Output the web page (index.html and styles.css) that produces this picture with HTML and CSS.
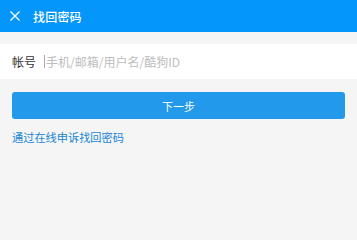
FILE: index.html
```html
<!DOCTYPE html>
<html lang="zh">
<head>
<meta charset="utf-8">
<link rel="stylesheet" href="styles.css">
</head>
<body>
<header class="topbar">
  <svg class="close" width="10" height="10" viewBox="0 0 10 10"><path d="M0.5 0.5L9.5 9.5M9.5 0.5L0.5 9.5" stroke="#fff" stroke-width="1.3" fill="none"/></svg>
  <span class="title">找回密码</span>
</header>
<div class="field">
  <span class="label">帐号</span>
  <span class="caret"></span>
  <span class="placeholder">手机/邮箱/用户名/酷狗ID</span>
</div>
<div class="actions">
  <button class="next">下一步</button>
  <a class="appeal">通过在线申诉找回密码</a>
</div>
</body>
</html>
```
FILE: styles.css
```css
html, body { margin: 0; padding: 0; }
body {
  background: #f5f5f5;
  font-family: "Noto Sans CJK SC", "Noto Sans", sans-serif;
  width: 357px;
  height: 229px;
  overflow: hidden;
}
.topbar {
  height: 32px;
  background: #0596fc;
  display: flex;
  align-items: center;
  padding-left: 10px;
  box-sizing: border-box;
}
.close { display: block; }
.title {
  color: #fff;
  font-size: 12px;
  font-weight: 500;
  margin-left: 13px;
  letter-spacing: 0.2px;
}
.field {
  margin-top: 12px;
  height: 35px;
  background: #fff;
  display: flex;
  align-items: center;
  padding-left: 12px;
}
.label {
  color: #333;
  font-size: 12px;
}
.caret {
  width: 1px;
  height: 13px;
  background: #aaa;
  margin-left: 8px;
  margin-right: 1px;
}
.placeholder {
  color: #bdbdbd;
  font-size: 12px;
}
.actions {
  padding: 13px 12px 0;
  display: flex;
  flex-direction: column;
  align-items: flex-start;
}
.next {
  width: 333px;
  height: 27px;
  border: none;
  border-radius: 3px;
  background: #2299ea;
  color: #fff;
  font-family: inherit;
  font-size: 11px;
  padding: 0;
}
.appeal {
  margin-top: 11px;
  color: #1a86d6;
  font-size: 11.2px;
  line-height: 14px;
}
```
